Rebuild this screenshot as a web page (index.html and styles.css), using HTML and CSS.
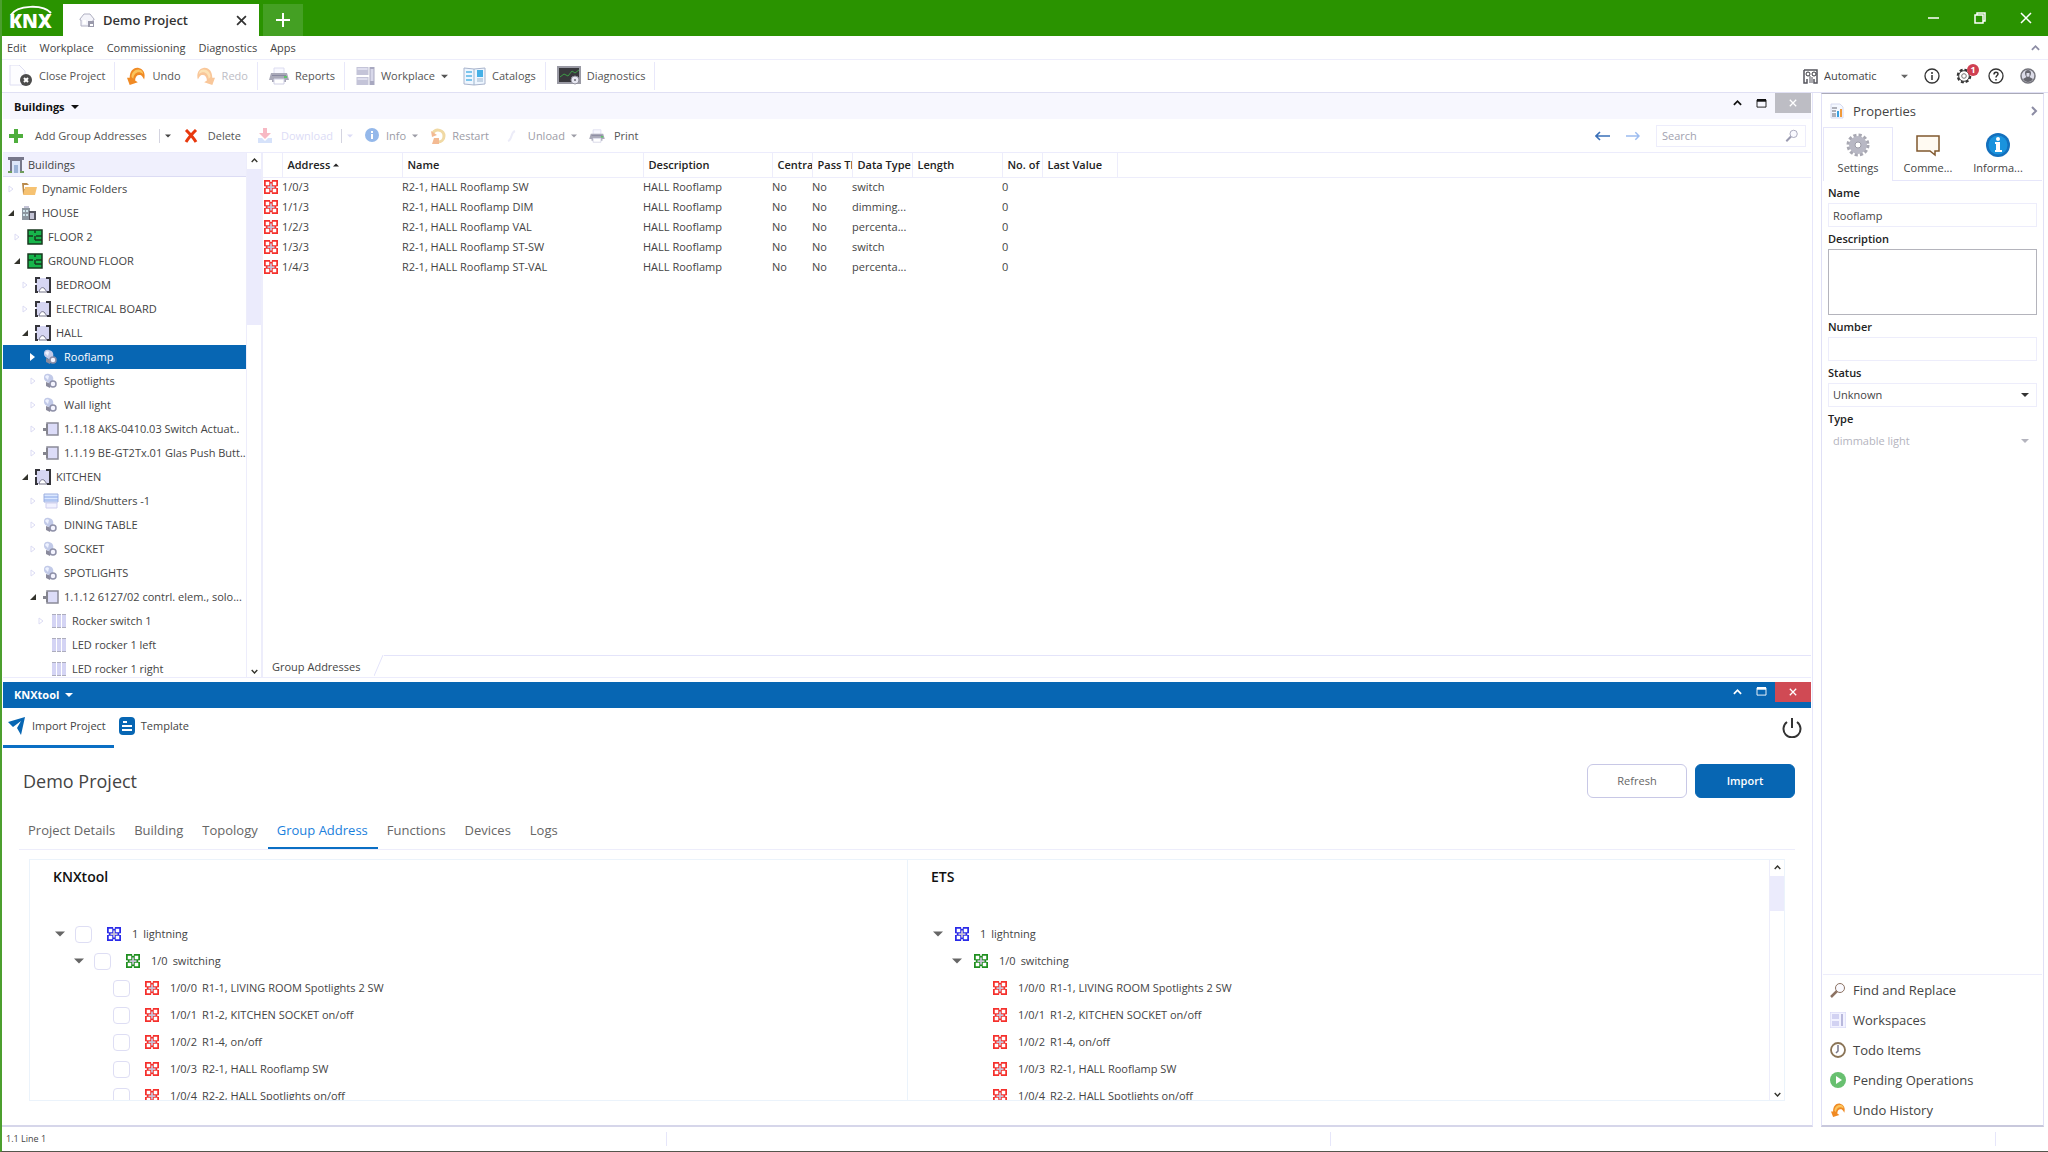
FILE: index.html
```html
<!DOCTYPE html>
<html lang="en">
<head>
    <meta charset="UTF-8">
    <meta name="viewport" content="width=device-width, initial-scale=1.0">
    <title>Demo Project</title>
    <link rel="stylesheet" href="styles.css">
</head>
<body>
    <!-- Icon set -->
    <svg class="sprite" aria-hidden="true">
        <symbol id="i-down" viewBox="0 0 8 8"><path fill="currentColor" d="M0 2h8L4 6z"/></symbol>
        <symbol id="i-up" viewBox="0 0 8 8"><path fill="currentColor" d="M0 6h8L4 2z"/></symbol>
        <symbol id="i-closed" viewBox="0 0 8 8"><path fill="none" stroke="currentColor" d="M2 1v6l4-3z"/></symbol>
        <symbol id="i-closed-full" viewBox="0 0 8 8"><path fill="currentColor" d="M1 0v8l5-4z"/></symbol>
        <symbol id="i-open" viewBox="0 0 8 8"><path fill="currentColor" d="M7 1v6H1z"/></symbol>
        <symbol id="i-chevron" viewBox="0 0 10 8"><path fill="none" stroke="currentColor" stroke-width="2" d="M1 6l4-4 4 4"/></symbol>
        <symbol id="i-chevron-down" viewBox="0 0 10 8"><path fill="none" stroke="currentColor" stroke-width="2" d="M1 2l4 4 4-4"/></symbol>
        <symbol id="i-max" viewBox="0 0 12 10"><path fill="none" stroke="currentColor" d="M1 1v8h10V1z"/><path fill="currentColor" d="M1 0h10v3H1z"/></symbol>
        <symbol id="i-x" viewBox="0 0 10 10"><path fill="none" stroke="currentColor" stroke-width="1.6" d="M1 1l8 8M9 1L1 9"/></symbol>
        <symbol id="i-group" viewBox="0 0 16 16">
            <path fill="currentColor" d="M0 0h16v16H0z"/>
            <path fill="#fff" d="M2 2h4v4H2zM10 2h4v4h-4zM2 10h4v4H2zM10 10h4v4h-4zM7 0h2v2H7zM7 14h2v2H7zM0 7h2v2H0zM14 7h2v2h-2z"/>
            <path stroke="#c9c2d6" stroke-width="2" d="M8 4v8M4 8h8"/>
        </symbol>
        <symbol id="i-undo" viewBox="0 0 20 20"><path fill="#f08a24" d="M0 12l3 8 9-3-3-2c0-5 3-7 6-6 2 1 3 3 4 5 2-7-1-12-6-13C7 0 3 5 3 12z"/><path fill="#fbc45c" d="M5 11c0-5 4-9 9-8 2 0 4 2 4 5-5-4-10-2-11 5z"/></symbol>
        <symbol id="i-redo" viewBox="0 0 20 20"><path fill="#f9c79a" d="M20 12l-3 8-9-3 3-2c0-5-3-7-6-6-2 1-3 3-4 5C-1 7 2 2 7 1c6-1 10 4 10 11z"/><path fill="#fde3b5" d="M15 11c0-5-4-9-9-8-2 0-4 2-4 5 5-4 10-2 11 5z"/></symbol>
        <symbol id="i-printer" viewBox="0 0 20 18"><path fill="#f8f8ff" stroke="#dcdcf0" d="M5 1h10v6H5z"/><path fill="#a9a9b8" d="M2 6h16l2 7h-3v2h-2v-3H5v3H3v-2H0z"/><path fill="#8888a0" d="M3 8h14v1H3z"/><path fill="#fff" stroke="#d0d0e4" d="M5 12h10v5H5z"/><path fill="#5fc46a" d="M15 9h3v2h-3z"/></symbol>
        <symbol id="i-workplace" viewBox="0 0 18 18"><path fill="#c4c4d8" d="M0 0h12v8H0zM0 10h12v8H0z"/><path fill="#dedeee" d="M1 1h10v2H1zM1 11h10v2H1z"/><path fill="#a8a8c0" d="M13 0h5v18h-5z"/><path fill="#d8d8ea" d="M14 2h3v12h-3z"/></symbol>
        <symbol id="i-workspaces" viewBox="0 0 16 16"><path fill="#f2f2ff" stroke="#d4d4f4" d="M0 0h16v16H0z"/><path fill="#d2d2f2" d="M2 2h7v5H2zM2 9h7v5H2z"/><path fill="#b8b8dc" d="M11 2h2v12h-2z"/></symbol>
        <symbol id="i-lamp" viewBox="0 0 16 16"><path fill="#c2cae8" d="M1 4c0-3 3-4 5-3 4 1 5 4 4 7l-3 3-3-2C1 7 1 6 1 4z"/><path fill="#eef2ff" d="M2 4c1-2 3-2 4-1l-1 4z"/><path fill="#8a8a9c" d="M3 9l5 2-1 4-4-2z"/><circle cx="10" cy="11" r="3" fill="#f4f4ff" stroke="#8e90a8" stroke-width="1.5"/></symbol>
        <symbol id="i-room" viewBox="0 0 16 16"><path fill="#d6d6f2" d="M1 1h13v14H1z"/><path fill="#35353b" d="M0 0h5v2H2v4H0zM0 8h2v6h1v2H0zM11 0h5v16h-4v-2h2V2h-3z"/><path fill="#fff" stroke="#75758a" d="M4 15c1-4 3-5 5-4l3 4z"/></symbol>
        <symbol id="i-floor" viewBox="0 0 16 16"><path fill="#17b54b" stroke="#18391f" stroke-width="1.5" d="M1 1h14v14H1z"/><path fill="none" stroke="#18391f" stroke-width="1.5" d="M1 7h5M9 7h6M8 1v3M8 7v4M8 11h7"/></symbol>
        <symbol id="i-device" viewBox="0 0 16 16"><path fill="#dcdcf8" stroke="#8a8a98" stroke-width="1.5" d="M4 2h11v12H4z"/><path fill="#85858f" d="M0 7h3v3H0zM3 3h2v10H3z"/></symbol>
        <symbol id="i-rocker" viewBox="0 0 16 16"><path fill="#d4d4f4" d="M1 2h4v12H1zM6 2h4v12H6zM11 2h4v12h-4z"/><path fill="#adadbd" d="M1 1h4v1H1zM6 1h4v1H6zM11 1h4v1h-4zM1 14h4v1H1zM6 14h4v1H6zM11 14h4v1h-4z"/></symbol>
        <symbol id="i-magnifier" viewBox="0 0 16 16"><path stroke="currentColor" stroke-width="2.5" d="M1 15l6-6"/><circle cx="10" cy="6" r="4.5" fill="#fafaff" stroke="currentColor"/></symbol>
    </svg>

    <header class="titlebar">
        <svg class="logo" viewBox="0 0 46 28" role="img" aria-label="KNX">
            <path fill="none" stroke="#fff" stroke-width="2" d="M3 11C9 1 35 0 43 9"/>
            <text x="1" y="24" class="logo-text">KNX</text>
        </svg>
        <div class="project-tab">
            <svg width="16" height="16" viewBox="0 0 16 16"><path fill="#f4f4fa" stroke="#b0b0c2" d="M1 7l4-5h6l4 5v1h-1v6H2V8H1z"/><path fill="#9a9aab" d="M9 9h6v6H9z"/><path fill="#fff" d="M11 12h3v2h-3zM4 8h3v4H4z"/></svg>
            <span class="project-name">Demo Project</span>
            <button class="plain" aria-label="Close tab"><svg width="11" height="11"><use href="#i-x"/></svg></button>
        </div>
        <button class="new-tab" aria-label="New tab"><svg width="14" height="14" viewBox="0 0 14 14"><path stroke="#fff" stroke-width="2" d="M7 0v14M0 7h14"/></svg></button>
        <div class="window-controls">
            <button class="plain" aria-label="Minimize"><svg width="12" height="12" viewBox="0 0 12 12"><path stroke="#fff" stroke-width="1.5" d="M0 6h11"/></svg></button>
            <button class="plain" aria-label="Restore"><svg width="12" height="12" viewBox="0 0 12 12"><path fill="none" stroke="#fff" stroke-width="1.5" d="M1 3h8v8H1zM3 3V1h8v8H9"/></svg></button>
            <button class="plain" aria-label="Close"><svg width="12" height="12" viewBox="0 0 12 12"><path stroke="#fff" stroke-width="1.5" d="M1 1l10 10M11 1L1 11"/></svg></button>
        </div>
    </header>

    <nav class="menubar">
        <button class="plain">Edit</button>
        <button class="plain">Workplace</button>
        <button class="plain">Commissioning</button>
        <button class="plain">Diagnostics</button>
        <button class="plain">Apps</button>
        <button class="plain push muted" aria-label="Collapse"><svg width="9" height="8"><use href="#i-chevron"/></svg></button>
    </nav>

    <div class="toolbar">
        <div class="tool-group">
            <button class="tool"><svg width="24" height="22" viewBox="0 0 24 22"><path fill="#fdfdff" stroke="#dedef2" d="M1 0h9l6 6v14H1z"/><circle cx="17" cy="15" r="6" fill="#4c4c4c"/><path stroke="#fff" stroke-width="2" d="M15 13l4 4M19 13l-4 4"/></svg>Close Project</button>
        </div>
        <div class="tool-group">
            <button class="tool"><svg width="20" height="18"><use href="#i-undo"/></svg>Undo</button>
            <button class="tool" disabled><svg width="20" height="18"><use href="#i-redo"/></svg>Redo</button>
        </div>
        <div class="tool-group">
            <button class="tool"><svg width="20" height="18"><use href="#i-printer"/></svg>Reports</button>
        </div>
        <div class="tool-group">
            <button class="tool"><svg width="19" height="18"><use href="#i-workplace"/></svg>Workplace <svg width="7" height="7"><use href="#i-down"/></svg></button>
            <button class="tool"><svg width="23" height="20" viewBox="0 0 23 20"><path fill="#eef6ff" stroke="#a9b4cc" d="M1 2l10 1 11-1v16l-11 1-10-1z"/><path stroke="#7cc5ec" stroke-width="2" d="M3 6h6M3 10h6M3 14h6"/><path fill="#45b0e6" d="M14 4h6v7h-6z"/><path stroke="#9db4cc" d="M11 3v16M14 13h6M14 15h6"/></svg>Catalogs</button>
        </div>
        <div class="tool-group">
            <button class="tool"><svg width="24" height="20" viewBox="0 0 24 20"><path fill="#38383c" stroke="#9a9aa4" stroke-width="2" d="M1 1h22v16H1z"/><path fill="none" stroke="#3d9c46" d="M3 11l4-3 4 2 4-5 3 2 4-3"/><circle cx="18" cy="14" r="4" fill="#e6e6f0" stroke="#8c8c98"/><circle cx="18" cy="14" r="1" fill="#66666e"/></svg>Diagnostics</button>
        </div>
        <div class="status-tools push">
            <svg width="15" height="15" viewBox="0 0 15 15"><path fill="none" stroke="#55555e" stroke-width="1.5" d="M1 1h13v13h-3v-4M1 1v13h3v-4"/><circle cx="5" cy="5" r="2" fill="none" stroke="#33333a"/><circle cx="11" cy="5" r="2" fill="none" stroke="#33333a"/><path stroke="#55555e" d="M7 7v7M9 8v6"/></svg>
            <div class="select-box automatic">
                <select aria-label="Connection"><option>Automatic</option></select>
                <svg width="7" height="7"><use href="#i-down"/></svg>
            </div>
            <button class="plain" aria-label="Information"><svg width="16" height="16" viewBox="0 0 16 16"><circle cx="8" cy="8" r="7" fill="none" stroke="#333" stroke-width="1.3"/><path stroke="#333" stroke-width="1.5" d="M8 7v5M8 4v2"/></svg></button>
            <button class="plain gear" aria-label="Updates"><svg width="16" height="16" viewBox="0 0 16 16"><circle cx="8" cy="8" r="6.3" fill="none" stroke="#333" stroke-width="2" stroke-dasharray="3 1.9"/><circle cx="8" cy="8" r="5.3" fill="#fff" stroke="#333"/><circle cx="8" cy="8" r="2.3" fill="none" stroke="#777"/></svg><span class="badge">1</span></button>
            <button class="plain" aria-label="Help"><svg width="16" height="16" viewBox="0 0 16 16"><circle cx="8" cy="8" r="7" fill="none" stroke="#333" stroke-width="1.3"/><path fill="none" stroke="#333" stroke-width="1.5" d="M6 6.500c0-3 4-3 4-.5 0 1.500-2 1.500-2 3.500M8 11v1.500"/></svg></button>
            <button class="plain" aria-label="Account"><svg width="16" height="16" viewBox="0 0 16 16"><circle cx="8" cy="8" r="7" fill="#dcdce8" stroke="#74747c" stroke-width="1.5"/><path fill="#66666e" d="M5 5c0-4 6-4 6 0 0 2-1 3-1.500 4l3.500 2c-2 4-8 4-10 0l3.500-2C6 8 5 7 5 5z"/><path fill="#dcdce8" d="M6.500 5h3v3L8 9 6.500 8z"/></svg></button>
        </div>
    </div>

    <main class="workspace">
        <section class="panel buildings">
            <div class="panel-head">
                <button class="plain panel-title">Buildings <svg width="8" height="8"><use href="#i-down"/></svg></button>
                <div class="panel-controls">
                    <button class="plain" aria-label="Collapse"><svg width="9" height="8"><use href="#i-chevron"/></svg></button>
                    <button class="plain" aria-label="Maximize"><svg width="11" height="9"><use href="#i-max"/></svg></button>
                    <button class="panel-close" aria-label="Close"><svg width="8" height="8"><use href="#i-x"/></svg></button>
                </div>
            </div>

            <div class="actions">
                <button class="action add"><svg width="14" height="14" viewBox="0 0 14 14"><path fill="#4fae3d" d="M5 0h4v5h5v4H9v5H5V9H0V5h5z"/></svg>Add Group Addresses</button>
                <button class="plain drop" aria-label="Add options"><svg width="6" height="8"><use href="#i-down"/></svg></button>
                <button class="action"><svg width="16" height="14" viewBox="0 0 14 14"><path stroke="#e8380d" stroke-width="3" d="M2 1c3 3 7 7 10 12M12 1C9 4 5 8 2 13"/></svg>Delete</button>
                <button class="action ghost" disabled><svg width="14" height="15" viewBox="0 0 14 15"><path fill="#f7b9c4" d="M5 0h4v5h4l-6 6-6-6h4z"/><path fill="#d6e2fa" d="M0 10h4l3 3 3-3h4v5H0z"/></svg>Download</button>
                <button class="plain drop ghost" aria-label="Download options" disabled><svg width="6" height="8"><use href="#i-down"/></svg></button>
                <button class="action dim" disabled><svg width="15" height="15" viewBox="0 0 15 15"><circle cx="7" cy="7" r="7" fill="#94b8ea"/><path stroke="#fff" stroke-width="2" d="M7 6v5M7 3v2"/></svg>Info<svg width="6" height="8"><use href="#i-down"/></svg></button>
                <button class="action dim restart" disabled><svg width="16" height="16" viewBox="0 0 16 16"><path fill="none" stroke="#f0d9a4" stroke-width="3" d="M3 5c3-5 11-3 11 3 0 4-3 6-6 6"/><path fill="#f3ba93" d="M1 3l1 6 5-2zM4 10h5v6H2z"/></svg>Restart</button>
                <button class="action dim" disabled><svg width="16" height="14" viewBox="0 0 16 14"><path fill="none" stroke="#ececf8" stroke-width="2" d="M2 12c5-2 2-8 7-10"/></svg>Unload<svg width="6" height="8"><use href="#i-down"/></svg></button>
                <button class="action"><svg width="16" height="14"><use href="#i-printer"/></svg>Print</button>
                <div class="finder push">
                    <button class="plain" aria-label="Back"><svg width="15" height="10" viewBox="0 0 15 10"><path fill="none" stroke="#3a70b8" stroke-width="1.6" d="M15 5H1M5 1L1 5l4 4"/></svg></button>
                    <button class="plain" aria-label="Forward"><svg width="14" height="10" viewBox="0 0 15 10"><path fill="none" stroke="#9cbcf0" stroke-width="1.6" d="M0 5h14M10 1l4 4-4 4"/></svg></button>
                    <label class="search">
                        <input type="search" placeholder="Search" aria-label="Search">
                        <svg width="14" height="13"><use href="#i-magnifier"/></svg>
                    </label>
                </div>
            </div>

            <div class="split">
                <div class="tree-pane">
                    <div class="tree-head">
                        <svg width="16" height="16" viewBox="0 0 16 16"><path fill="#77778a" d="M0 0h16v3H0zM2 3h12v13H2z"/><path fill="#dde6fa" d="M4 4h8v12H4z"/><path fill="#9db4d8" d="M6 8h4v8H6z"/><path fill="#6f9c5c" d="M0 14h4v2H0zM12 14h4v2h-4z"/></svg>
                        Buildings
                    </div>
                    <ul class="tree">
                        <li class="node l0"><svg class="toggle"><use href="#i-closed"/></svg><svg class="icon" viewBox="0 0 16 16"><path fill="#b98a4c" d="M1 2h5l2 2h6v9H2z"/><path fill="#fff" d="M3 4h11v4H3z"/><path fill="#f6c272" d="M4 6h12l-2 8H2z"/></svg><span>Dynamic Folders</span></li>
                        <li class="node l0"><svg class="toggle open"><use href="#i-open"/></svg><svg class="icon" viewBox="0 0 16 16"><path fill="#8c96a0" d="M1 3h8v12H1z"/><path fill="#cfe4ea" d="M2 5h2v2H2zM5 5h2v2H5zM2 9h2v2H2zM5 9h2v2H5z"/><path fill="#55555f" d="M8 6h7v9H8z"/><path fill="#c4c4d6" d="M9 8h4v6H9zM3 1h5v2H3z"/></svg><span>HOUSE</span></li>
                        <li class="node l1"><svg class="toggle"><use href="#i-closed"/></svg><svg class="icon"><use href="#i-floor"/></svg><span>FLOOR 2</span></li>
                        <li class="node l1"><svg class="toggle open"><use href="#i-open"/></svg><svg class="icon"><use href="#i-floor"/></svg><span>GROUND FLOOR</span></li>
                        <li class="node l2"><svg class="toggle"><use href="#i-closed"/></svg><svg class="icon"><use href="#i-room"/></svg><span>BEDROOM</span></li>
                        <li class="node l2"><svg class="toggle"><use href="#i-closed"/></svg><svg class="icon"><use href="#i-room"/></svg><span>ELECTRICAL BOARD</span></li>
                        <li class="node l2"><svg class="toggle open"><use href="#i-open"/></svg><svg class="icon"><use href="#i-room"/></svg><span>HALL</span></li>
                        <li class="node l3 selected"><svg class="toggle"><use href="#i-closed-full"/></svg><svg class="icon"><use href="#i-lamp"/></svg><span>Rooflamp</span></li>
                        <li class="node l3"><svg class="toggle"><use href="#i-closed"/></svg><svg class="icon"><use href="#i-lamp"/></svg><span>Spotlights</span></li>
                        <li class="node l3"><svg class="toggle"><use href="#i-closed"/></svg><svg class="icon"><use href="#i-lamp"/></svg><span>Wall light</span></li>
                        <li class="node l3"><svg class="toggle"><use href="#i-closed"/></svg><svg class="icon"><use href="#i-device"/></svg><span>1.1.18 AKS-0410.03 Switch Actuat..</span></li>
                        <li class="node l3"><svg class="toggle"><use href="#i-closed"/></svg><svg class="icon"><use href="#i-device"/></svg><span>1.1.19 BE-GT2Tx.01 Glas Push Butt..</span></li>
                        <li class="node l2"><svg class="toggle open"><use href="#i-open"/></svg><svg class="icon"><use href="#i-room"/></svg><span>KITCHEN</span></li>
                        <li class="node l3"><svg class="toggle"><use href="#i-closed"/></svg><svg class="icon" viewBox="0 0 16 16"><path fill="#dbe8ff" stroke="#9fb0e0" d="M1 1h14v8H1z"/><path stroke="#8aa6e6" d="M1 4h14M1 7h14"/><path fill="#f2f2ff" stroke="#cfcfee" d="M3 10h11v5H3z"/></svg><span>Blind/Shutters -1</span></li>
                        <li class="node l3"><svg class="toggle"><use href="#i-closed"/></svg><svg class="icon"><use href="#i-lamp"/></svg><span>DINING TABLE</span></li>
                        <li class="node l3"><svg class="toggle"><use href="#i-closed"/></svg><svg class="icon"><use href="#i-lamp"/></svg><span>SOCKET</span></li>
                        <li class="node l3"><svg class="toggle"><use href="#i-closed"/></svg><svg class="icon"><use href="#i-lamp"/></svg><span>SPOTLIGHTS</span></li>
                        <li class="node l3"><svg class="toggle open"><use href="#i-open"/></svg><svg class="icon"><use href="#i-device"/></svg><span>1.1.12 6127/02 contrl. elem., solo...</span></li>
                        <li class="node l4"><svg class="toggle"><use href="#i-closed"/></svg><svg class="icon"><use href="#i-rocker"/></svg><span>Rocker switch 1</span></li>
                        <li class="node l4"><svg class="toggle"></svg><svg class="icon"><use href="#i-rocker"/></svg><span>LED rocker 1 left</span></li>
                        <li class="node l4"><svg class="toggle"></svg><svg class="icon"><use href="#i-rocker"/></svg><span>LED rocker 1 right</span></li>
                    </ul>
                </div>
                <div class="scrollbar">
                    <svg width="7" height="7"><use href="#i-chevron"/></svg>
                    <div class="thumb tree-thumb"></div>
                    <svg width="7" height="7"><use href="#i-chevron-down"/></svg>
                </div>

                <div class="list-pane">
                    <table class="addresses">
                        <colgroup>
                            <col class="c-icon"><col class="c-address"><col class="c-name"><col class="c-desc"><col class="c-flag"><col class="c-flag"><col class="c-type"><col class="c-length"><col class="c-flag"><col class="c-last"><col>
                        </colgroup>
                        <thead>
                            <tr><th></th><th>Address <svg width="6" height="8"><use href="#i-up"/></svg></th><th>Name</th><th>Description</th><th>Central</th><th>Pass Through</th><th>Data Type</th><th>Length</th><th>No. of</th><th>Last Value</th><th></th></tr>
                        </thead>
                        <tbody>
                            <tr><td><svg class="group red"><use href="#i-group"/></svg></td><td>1/0/3</td><td>R2-1, HALL Rooflamp SW</td><td>HALL Rooflamp</td><td>No</td><td>No</td><td>switch</td><td></td><td>0</td><td></td><td></td></tr>
                            <tr><td><svg class="group red"><use href="#i-group"/></svg></td><td>1/1/3</td><td>R2-1, HALL Rooflamp DIM</td><td>HALL Rooflamp</td><td>No</td><td>No</td><td>dimming...</td><td></td><td>0</td><td></td><td></td></tr>
                            <tr><td><svg class="group red"><use href="#i-group"/></svg></td><td>1/2/3</td><td>R2-1, HALL Rooflamp VAL</td><td>HALL Rooflamp</td><td>No</td><td>No</td><td>percenta...</td><td></td><td>0</td><td></td><td></td></tr>
                            <tr><td><svg class="group red"><use href="#i-group"/></svg></td><td>1/3/3</td><td>R2-1, HALL Rooflamp ST-SW</td><td>HALL Rooflamp</td><td>No</td><td>No</td><td>switch</td><td></td><td>0</td><td></td><td></td></tr>
                            <tr><td><svg class="group red"><use href="#i-group"/></svg></td><td>1/4/3</td><td>R2-1, HALL Rooflamp ST-VAL</td><td>HALL Rooflamp</td><td>No</td><td>No</td><td>percenta...</td><td></td><td>0</td><td></td><td></td></tr>
                        </tbody>
                    </table>
                    <div class="sheet-tabs">
                        <button class="plain sheet-tab">Group Addresses</button>
                        <svg width="10" height="22" viewBox="0 0 10 22"><path fill="none" stroke="#e4e4fa" d="M0 21L9 0"/></svg>
                        <div class="sheet-line"></div>
                    </div>
                </div>
            </div>
        </section>

        <section class="panel knxtool">
            <div class="panel-head active">
                <button class="plain panel-title">KNXtool <svg width="8" height="8"><use href="#i-down"/></svg></button>
                <div class="panel-controls">
                    <button class="plain" aria-label="Collapse"><svg width="9" height="8"><use href="#i-chevron"/></svg></button>
                    <button class="plain" aria-label="Maximize"><svg width="11" height="9"><use href="#i-max"/></svg></button>
                    <button class="panel-close" aria-label="Close"><svg width="8" height="8"><use href="#i-x"/></svg></button>
                </div>
            </div>

            <div class="app-tabs">
                <button class="app-tab current"><svg width="18" height="18" viewBox="0 0 18 18"><path fill="#0766b3" d="M0 5L17 0l-4 18-4-7 4-7-8 6z"/></svg>Import Project</button>
                <button class="app-tab"><svg width="16" height="18" viewBox="0 0 16 18"><rect width="16" height="18" rx="4" fill="#0766b3"/><path fill="#fff" d="M4 4h4v2H4zM3 8h10v2H3zM3 12h10v2H3z"/></svg>Template</button>
                <button class="plain push power" aria-label="Log out"><svg width="20" height="20" viewBox="0 0 20 20"><path fill="none" stroke="#333" stroke-width="2" d="M5 4a8.500 8.500 0 1 0 10 0M10 0v10"/></svg></button>
            </div>

            <div class="app-body">
                <div class="app-title">
                    <h1>Demo Project</h1>
                    <button class="btn">Refresh</button>
                    <button class="btn primary">Import</button>
                </div>
                <nav class="tabs">
                    <a href="#details">Project Details</a>
                    <a href="#building">Building</a>
                    <a href="#topology">Topology</a>
                    <a href="#group" class="current">Group Address</a>
                    <a href="#functions">Functions</a>
                    <a href="#devices">Devices</a>
                    <a href="#logs">Logs</a>
                </nav>

                <div class="compare">
                    <div class="side">
                        <h2>KNXtool</h2>
                        <ul class="group-tree">
                            <li class="g0"><svg class="caret"><use href="#i-down"/></svg><input type="checkbox" aria-label="1 lightning"><svg class="group blue"><use href="#i-group"/></svg><span>1</span>lightning</li>
                            <li class="g1"><svg class="caret"><use href="#i-down"/></svg><input type="checkbox" aria-label="1/0 switching"><svg class="group green"><use href="#i-group"/></svg><span>1/0</span>switching</li>
                            <li class="g2"><svg class="caret"></svg><input type="checkbox" aria-label="1/0/0"><svg class="group red"><use href="#i-group"/></svg><span>1/0/0</span>R1-1, LIVING ROOM Spotlights 2 SW</li>
                            <li class="g2"><svg class="caret"></svg><input type="checkbox" aria-label="1/0/1"><svg class="group red"><use href="#i-group"/></svg><span>1/0/1</span>R1-2, KITCHEN SOCKET on/off</li>
                            <li class="g2"><svg class="caret"></svg><input type="checkbox" aria-label="1/0/2"><svg class="group red"><use href="#i-group"/></svg><span>1/0/2</span>R1-4, on/off</li>
                            <li class="g2"><svg class="caret"></svg><input type="checkbox" aria-label="1/0/3"><svg class="group red"><use href="#i-group"/></svg><span>1/0/3</span>R2-1, HALL Rooflamp SW</li>
                            <li class="g2"><svg class="caret"></svg><input type="checkbox" aria-label="1/0/4"><svg class="group red"><use href="#i-group"/></svg><span>1/0/4</span>R2-2, HALL Spotlights on/off</li>
                        </ul>
                    </div>
                    <div class="side ets">
                        <h2>ETS</h2>
                        <ul class="group-tree">
                            <li class="g0"><svg class="caret"><use href="#i-down"/></svg><svg class="group blue"><use href="#i-group"/></svg><span>1</span>lightning</li>
                            <li class="g1"><svg class="caret"><use href="#i-down"/></svg><svg class="group green"><use href="#i-group"/></svg><span>1/0</span>switching</li>
                            <li class="g2"><svg class="caret"></svg><svg class="group red"><use href="#i-group"/></svg><span>1/0/0</span>R1-1, LIVING ROOM Spotlights 2 SW</li>
                            <li class="g2"><svg class="caret"></svg><svg class="group red"><use href="#i-group"/></svg><span>1/0/1</span>R1-2, KITCHEN SOCKET on/off</li>
                            <li class="g2"><svg class="caret"></svg><svg class="group red"><use href="#i-group"/></svg><span>1/0/2</span>R1-4, on/off</li>
                            <li class="g2"><svg class="caret"></svg><svg class="group red"><use href="#i-group"/></svg><span>1/0/3</span>R2-1, HALL Rooflamp SW</li>
                            <li class="g2"><svg class="caret"></svg><svg class="group red"><use href="#i-group"/></svg><span>1/0/4</span>R2-2, HALL Spotlights on/off</li>
                        </ul>
                    </div>
                    <div class="scrollbar slim">
                        <svg width="7" height="7"><use href="#i-chevron"/></svg>
                        <div class="thumb"></div>
                        <svg width="7" height="7"><use href="#i-chevron-down"/></svg>
                    </div>
                </div>
            </div>
        </section>

        <aside class="properties">
            <div class="prop-head">
                <svg width="14" height="16" viewBox="0 0 14 16"><path fill="#f4f8ff" stroke="#d6daf0" d="M1 1h9l3 3v11H1z"/><path stroke="#666672" d="M2 5h5M2 8h4M2 11h4M2 13h4"/><path fill="#3aa0e0" d="M7 8h2v6H7z"/><path fill="#f09a3a" d="M10 6h2v8h-2z"/></svg>
                Properties
                <button class="plain push muted" aria-label="Hide"><svg width="7" height="10" viewBox="0 0 7 10"><path fill="none" stroke="currentColor" stroke-width="2" d="M1 1l4 4-4 4"/></svg></button>
            </div>
            <div class="prop-tabs">
                <button class="prop-tab current"><svg width="24" height="24" viewBox="0 0 24 24"><circle cx="12" cy="12" r="9.500" fill="none" stroke="#a8a8b2" stroke-width="4" stroke-dasharray="3 2"/><circle cx="12" cy="12" r="6" fill="#fff" stroke="#b8b8c4" stroke-width="6"/><circle cx="12" cy="12" r="3" fill="#fff" stroke="#9a9aa6"/></svg>Settings</button>
                <button class="prop-tab"><svg width="24" height="24" viewBox="0 0 24 24"><path fill="#fffaf2" stroke="#80582e" stroke-width="1.5" d="M1 3h22v15h-4v4l-5-4H1z"/></svg>Comme...</button>
                <button class="prop-tab"><svg width="24" height="24" viewBox="0 0 24 24"><circle cx="12" cy="12" r="12" fill="#1470bd"/><circle cx="12" cy="12" r="9.500" fill="#1a93dd"/><circle cx="12" cy="6" r="2" fill="#fff"/><path fill="#fff" d="M9 9h5v8h2v2H9v-2h1v-6H9z"/></svg>Informa...</button>
            </div>
            <form class="fields">
                <label for="name">Name</label>
                <input id="name" type="text" value="Rooflamp">
                <label for="description">Description</label>
                <textarea id="description"></textarea>
                <label for="number">Number</label>
                <input id="number" type="text">
                <label for="status">Status</label>
                <div class="select-box">
                    <select id="status"><option>Unknown</option></select>
                    <svg width="8" height="8"><use href="#i-down"/></svg>
                </div>
                <label for="type">Type</label>
                <div class="select-box off">
                    <select id="type" disabled><option>dimmable light</option></select>
                    <svg width="8" height="8"><use href="#i-down"/></svg>
                </div>
            </form>
            <div class="shortcuts">
                <button class="shortcut brown"><svg width="16" height="16"><use href="#i-magnifier"/></svg>Find and Replace</button>
                <button class="shortcut"><svg width="16" height="16"><use href="#i-workspaces"/></svg>Workspaces</button>
                <button class="shortcut"><svg width="16" height="16" viewBox="0 0 16 16"><circle cx="8" cy="8" r="7" fill="#fff" stroke="#8a7456" stroke-width="1.800"/><path fill="none" stroke="#77778a" stroke-width="1.500" d="M8 3v6l-2 2"/></svg>Todo Items</button>
                <button class="shortcut"><svg width="16" height="16" viewBox="0 0 16 16"><circle cx="8" cy="8" r="8" fill="#68c070"/><path fill="#fff" d="M6 4v8l6-4z"/></svg>Pending Operations</button>
                <button class="shortcut"><svg width="16" height="14"><use href="#i-undo"/></svg>Undo History</button>
            </div>
        </aside>
    </main>

    <footer class="statusbar">
        <span>1.1 Line 1</span>
        <span></span>
        <span></span>
        <span></span>
    </footer>
</body>
</html>
```
FILE: styles.css
```css
* {
    box-sizing: border-box;
}

body {
    margin: 0;
    height: 100vh;
    display: flex;
    flex-direction: column;
    overflow: hidden;
    background: #fff;
    color: #444;
    font-family: "Open Sans", "Noto Sans", sans-serif;
    font-size: 11px;
    line-height: 16px;
    border-left: 2px solid #4c9f2e;
    border-bottom: 1px solid #55554c;
}

button, input, select, textarea {
    font: inherit;
    color: inherit;
}

button {
    border: none;
    background: none;
    padding: 0;
    cursor: pointer;
    white-space: nowrap;
}

button:disabled {
    cursor: default;
}

ul {
    list-style: none;
    margin: 0;
    padding: 0;
}

svg {
    flex: none;
}

.sprite {
    position: absolute;
    width: 0;
    height: 0;
}

.plain {
    display: flex;
    align-items: center;
}

.push {
    margin-left: auto;
}

.muted {
    color: #8c8ca4;
}

/* Title bar */
.titlebar {
    display: flex;
    height: 36px;
    margin-left: -2px;
    background: #2a9300;
    color: #fff;
}

.logo {
    width: 46px;
    height: 28px;
    margin: 4px 9px 0 8px;
}

.logo-text {
    fill: #fff;
    font-size: 19px;
    font-weight: 800;
}

.project-tab {
    display: flex;
    align-items: center;
    width: 196px;
    margin-top: 4px;
    padding: 0 12px 0 16px;
    gap: 8px;
    background: #fff;
    color: #333;
}

.project-name {
    flex: 1;
    font-size: 13px;
    font-weight: 600;
}

.new-tab {
    width: 40px;
    margin: 4px 0 0 4px;
    background: #44a023;
}

.new-tab svg {
    display: block;
    margin: auto;
}

.window-controls {
    display: flex;
    gap: 34px;
    margin-left: auto;
    padding-right: 16px;
}

/* Menu and main toolbar */
.menubar {
    display: flex;
    align-items: center;
    gap: 13px;
    height: 24px;
    padding: 1px 8px 0 5px;
    border-bottom: 1px solid #ededfb;
}

.toolbar {
    display: flex;
    align-items: center;
    height: 33px;
    border-bottom: 1px solid #e0e0f4;
}

.tool-group {
    display: flex;
    align-items: center;
    gap: 15px;
    height: 28px;
    padding: 0 9px 0 11px;
    border-right: 1px solid #e8e8fa;
}

.tool-group:first-child {
    padding-left: 7px;
}

.tool {
    display: flex;
    align-items: center;
    gap: 6px;
    color: #555;
}

.tool:disabled {
    color: #bdbdc6;
}

.status-tools {
    display: flex;
    align-items: center;
    gap: 16px;
    padding-right: 12px;
}

.select-box {
    position: relative;
    display: flex;
    align-items: center;
}

.select-box select {
    appearance: none;
    width: 100%;
    height: 24px;
    padding: 0 4px;
    border: 1px solid #ededfb;
    background: none;
    opacity: 1;
}

.select-box svg {
    position: absolute;
    right: 8px;
    color: #333;
    pointer-events: none;
}

.automatic {
    width: 88px;
    margin-left: -14px;
}

.automatic select {
    border: none;
}

.automatic svg {
    right: 0;
    color: #666;
}

.gear {
    position: relative;
}

.badge {
    position: absolute;
    top: -4px;
    right: -7px;
    width: 12px;
    height: 12px;
    border-radius: 50%;
    background: #d04052;
    color: #fff;
    font-size: 9px;
    font-weight: 700;
    line-height: 12px;
    text-align: center;
}

/* Workspace */
.workspace {
    flex: 1;
    min-height: 0;
    display: grid;
    grid-template-columns: minmax(0, 1fr) 223px;
    grid-template-rows: minmax(0, 588fr) minmax(0, 445fr);
    column-gap: 8px;
    padding-right: 4px;
}

.panel {
    display: flex;
    flex-direction: column;
    min-height: 0;
    padding: 0 1px;
    border-right: 1px solid #e6e6fa;
}

.panel-head {
    display: flex;
    flex: none;
    justify-content: space-between;
    height: 26px;
    background: #f7f7fe;
    color: #111;
}

.panel-head.active {
    background: #0766b3;
    color: #fff;
}

.panel-title {
    gap: 6px;
    padding: 1px 0 0 11px;
    font-weight: 700;
}

.panel-controls {
    display: flex;
    align-items: flex-start;
}

.panel-controls .plain {
    height: 20px;
    margin-right: 14px;
}

.panel-controls .plain + .plain {
    margin-right: 8px;
}

.panel-close {
    width: 36px;
    height: 20px;
    background: #bdbdc4;
    color: #fff;
}

.active .panel-close {
    background: #d04a54;
}

.actions {
    display: flex;
    flex: none;
    align-items: center;
    height: 33px;
    padding-left: 6px;
}

.action {
    display: flex;
    align-items: center;
    gap: 9px;
    margin-right: 17px;
    color: #555;
}

.action.add {
    gap: 12px;
    margin-right: 12px;
}

.action.dim {
    gap: 6px;
    margin-right: 12px;
}

.action:disabled.dim {
    color: #9c9ca6;
}

.action.restart {
    margin-right: 17px;
}

.action.ghost {
    margin-right: 8px;
}

.action:disabled.ghost, .drop.ghost {
    color: #dcdcf6;
}

.drop {
    height: 14px;
    margin-right: 12px;
    padding-left: 5px;
    border-left: 1px solid #d4d4e0;
}

.finder {
    display: flex;
    align-items: center;
    gap: 16px;
    padding-right: 5px;
}

.search {
    display: flex;
    align-items: center;
    width: 150px;
    height: 22px;
    padding: 0 6px 0 5px;
    border: 1px solid #ededfb;
    color: #9a9ab0;
}

.search input {
    flex: 1;
    width: 0;
    padding: 0;
    border: none;
    outline: none;
}

.search input::placeholder {
    color: #a2a2b0;
}

.split {
    flex: 1;
    display: flex;
    min-height: 0;
    margin-bottom: 4px;
    border-top: 1px solid #ececfc;
    border-bottom: 1px solid #ececfc;
}

.tree-pane {
    width: 243px;
    overflow: hidden;
}

.tree-head {
    display: flex;
    align-items: center;
    gap: 4px;
    height: 24px;
    padding-left: 5px;
    border-bottom: 1px solid #dcdcf4;
    background: #f0f0fd;
}

.node {
    display: flex;
    align-items: center;
    height: 24px;
}

.node span {
    flex: 1;
    overflow: hidden;
    white-space: nowrap;
}

.toggle {
    width: 8px;
    height: 8px;
    margin: 0 6px 0 2px;
    color: #dcdcf4;
}

.toggle.open {
    color: #33332c;
}

.icon {
    width: 16px;
    height: 16px;
    margin-right: 5px;
}

.l0 { padding-left: 2px; }
.l1 { padding-left: 8px; }
.l2 { padding-left: 16px; }
.l3 { padding-left: 24px; }
.l4 { padding-left: 32px; }

.selected {
    background: #0766b3;
    color: #fff;
}

.selected .toggle {
    color: #fff;
}

.scrollbar {
    display: flex;
    flex: none;
    flex-direction: column;
    align-items: center;
    width: 17px;
    padding: 4px 0 2px;
    border-left: 1px solid #ededfb;
    border-right: 2px solid #ededfb;
    color: #33332c;
}

.scrollbar.slim {
    width: 15px;
    border-right: none;
}

.thumb {
    width: 100%;
    height: 35px;
    margin: 5px 0 auto;
    background: #ebebfc;
}

.tree-thumb {
    height: 156px;
}

.list-pane {
    flex: 1;
    min-width: 0;
    display: flex;
    flex-direction: column;
    justify-content: space-between;
}

.addresses {
    width: 100%;
    table-layout: fixed;
    border-collapse: collapse;
    border-spacing: 0;
}

.addresses th {
    height: 24px;
    padding: 0 0 0 5px;
    border-right: 1px solid #ededfb;
    border-bottom: 1px solid #ededfb;
    overflow: hidden;
    white-space: nowrap;
    text-align: left;
    font-weight: 600;
    color: #222;
}

.addresses th:last-child {
    border-right: none;
}

.addresses td {
    height: 20px;
    padding: 0;
    white-space: nowrap;
}

.addresses td svg {
    display: block;
    margin-left: 1px;
}

.c-icon { width: 19px; }
.c-address { width: 120px; }
.c-name { width: 241px; }
.c-desc { width: 129px; }
.c-flag { width: 40px; }
.c-type { width: 60px; }
.c-length { width: 90px; }
.c-last { width: 75px; }

.group {
    width: 14px;
    height: 14px;
}

.red { color: #f5302c; }
.green { color: #1f8f1f; }
.blue { color: #2a2ae8; }

.sheet-tabs {
    display: flex;
    height: 22px;
}

.sheet-tab {
    padding: 3px 14px 0 9px;
}

.sheet-line {
    flex: 1;
    border-top: 1px solid #e4e4fa;
}

/* KNXtool app */
.knxtool {
    border-bottom: 2px solid #d6d6ea;
}

.app-tabs {
    display: flex;
    flex: none;
    height: 40px;
    padding-right: 9px;
}

.app-tab {
    display: flex;
    align-items: center;
    gap: 6px;
    padding: 0 8px 3px 5px;
}

.app-tab.current {
    padding-bottom: 0;
    border-bottom: 3px solid #0a6fc4;
}

.app-body {
    flex: 1;
    display: flex;
    flex-direction: column;
    min-height: 0;
    padding: 16px 16px 24px;
}

.app-title {
    display: flex;
    flex: none;
    align-items: center;
    gap: 8px;
    height: 34px;
    margin-bottom: 20px;
    padding-left: 4px;
}

h1 {
    flex: 1;
    margin: 0;
    font-size: 18px;
    font-weight: 400;
}

.btn {
    width: 100px;
    height: 34px;
    border: 1px solid #c8c8e6;
    border-radius: 6px;
    color: #666;
}

.btn.primary {
    border-color: #0766b3;
    background: #0766b3;
    color: #fff;
    font-weight: 600;
}

.tabs {
    display: flex;
    flex: none;
    height: 32px;
    border-bottom: 1px solid #ededfb;
}

.tabs a {
    padding: 2px 10px 0 9px;
    font-size: 13px;
    line-height: 20px;
    color: #666;
    text-decoration: none;
}

.tabs a.current {
    color: #1a80dc;
    border-bottom: 2px solid #0a6fc4;
}

.compare {
    flex: 1;
    display: flex;
    min-height: 0;
    margin: 9px 10px 0;
    border: 1px solid #ebf3fb;
}

.side {
    flex: 0 0 50%;
    overflow: hidden;
    padding: 7px 0 0 23px;
}

.side.ets {
    flex: 1;
    border-left: 1px solid #ebf3fb;
}

h2 {
    margin: 0 0 34px;
    font-size: 14px;
    line-height: 20px;
    font-weight: 600;
    color: #111;
}

.group-tree li {
    display: flex;
    align-items: center;
    height: 27px;
    white-space: nowrap;
}

.group-tree span {
    margin: 0 5px 0 11px;
}

.group-tree input {
    appearance: none;
    width: 17px;
    height: 17px;
    margin: 0 15px 0 0;
    border: 1px solid #dedef4;
    border-radius: 4px;
}

.caret {
    width: 10px;
    height: 10px;
    margin: 0 10px 0 2px;
    color: #666;
}

.ets .caret {
    margin-right: 12px;
}

.g1 { padding-left: 19px; }
.g2 { padding-left: 38px; }

/* Properties sidebar */
.properties {
    grid-column: 2;
    grid-row: 1 / 3;
    display: flex;
    flex-direction: column;
    min-height: 0;
    padding: 0 1px;
    border: 1px solid #e0e0f6;
    border-top-color: #aaaab8;
    border-bottom: 2px solid #c8c8dc;
}

.prop-head {
    display: flex;
    align-items: center;
    gap: 9px;
    height: 33px;
    padding: 1px 4px 0 7px;
    font-size: 13px;
    line-height: 20px;
}

.prop-tabs {
    display: flex;
    height: 54px;
}

.prop-tabs::after {
    content: "";
    flex: 1;
    border-bottom: 1px solid #e6e6fa;
}

.prop-tab {
    flex: 0 0 70px;
    display: flex;
    flex-direction: column;
    align-items: center;
    gap: 3px;
    padding-top: 6px;
    border-bottom: 1px solid #e6e6fa;
}

.prop-tab.current {
    border: 1px solid #e6e6fa;
    border-bottom: none;
    padding-top: 5px;
}

.fields {
    flex: 1;
    display: flex;
    flex-direction: column;
    padding: 0 5px;
    border-bottom: 1px solid #ededfb;
}

.fields label {
    height: 22px;
    padding-top: 4px;
    font-weight: 600;
    color: #222;
}

.fields input, .fields textarea {
    width: 100%;
    height: 24px;
    padding: 0 4px;
    border: 1px solid #ededfb;
    background: none;
}

.fields textarea {
    height: 66px;
    border-color: #b4b4bc;
    resize: none;
}

.off, .select-box.off svg {
    color: #b4b4be;
}

.off select {
    border-color: transparent;
}

.shortcut {
    display: flex;
    align-items: center;
    gap: 7px;
    width: 100%;
    height: 30px;
    padding-left: 7px;
    font-size: 13px;
}

.brown svg {
    color: #8c7262;
}

/* Status bar */
.statusbar {
    display: flex;
    align-items: center;
    height: 24px;
    font-size: 9px;
}

.statusbar span {
    flex: 1;
    height: 14px;
    padding-left: 4px;
    line-height: 14px;
    border-right: 1px solid #e6e6fa;
}

.statusbar span:last-child {
    flex: none;
    width: 52px;
    border-right: none;
}
```
